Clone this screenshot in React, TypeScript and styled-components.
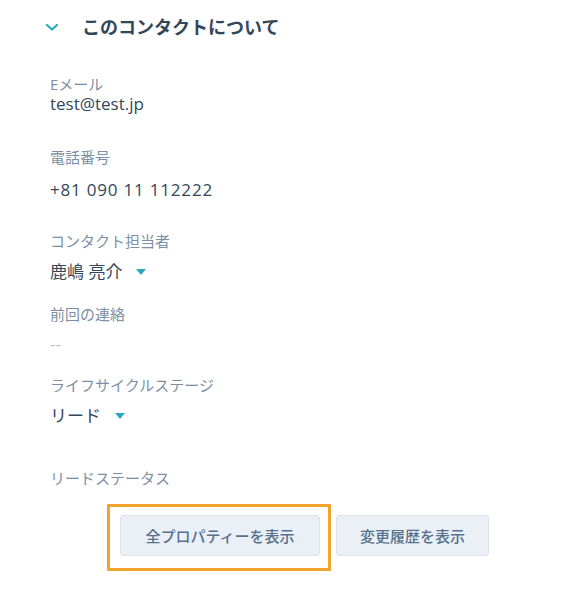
import React from "react";
import styled, { createGlobalStyle } from "styled-components";

const Global = createGlobalStyle`
  html, body { margin: 0; padding: 0; background: #ffffff; }
  body { font-family: Lato, "Noto Sans CJK JP", sans-serif; }
`;

const Page = styled.div`
  width: 566px;
  height: 600px;
  box-sizing: border-box;
  padding-top: 12px;
  background: #ffffff;
`;

const Header = styled.div`
  display: flex;
  align-items: center;
  height: 30px;
  padding-left: 45px;
  gap: 23px;
`;

const Title = styled.h2`
  margin: 0;
  font-family: Lato, "Noto Sans CJK JP", sans-serif;
  font-size: 18px;
  font-weight: 700;
  color: #33475b;
  line-height: 30px;
`;

const Body = styled.div`
  padding-left: 50px;
  margin-top: 33px;
`;

const Field = styled.div<{ $mt: number; $gap: number }>`
  display: flex;
  flex-direction: column;
  gap: ${(p) => p.$gap}px;
  margin-top: ${(p) => p.$mt}px;
`;

const Label = styled.div`
  font-family: "Open Sans", "Noto Sans CJK JP", sans-serif;
  font-size: 15px;
  line-height: 18px;
  color: #7d8fa4;
`;

const Value = styled.div<{ $muted?: boolean; $spaced?: boolean }>`
  display: flex;
  align-items: center;
  font-family: "Open Sans", "Noto Sans CJK JP", sans-serif;
  font-size: 17px;
  line-height: 20px;
  letter-spacing: ${(p) => (p.$spaced ? "0.8px" : "0")};
  color: ${(p) => (p.$muted ? "#b5c0cc" : "#33475b")};
`;

const Caret = styled.span`
  display: inline-block;
  margin-left: 14px;
  width: 0;
  height: 0;
  border-left: 5px solid transparent;
  border-right: 5px solid transparent;
  border-top: 6px solid #2ba6bf;
`;

const Actions = styled.div`
  display: flex;
  align-items: flex-start;
  gap: 5px;
  margin-top: 17px;
  padding-left: 107px;
`;

const Highlight = styled.div`
  display: flex;
  padding: 8px 8px 12px 10px;
  border: 3px solid #f1a52e;
  border-radius: 1px;
`;

const Button = styled.button<{ $w: number }>`
  width: ${(p) => p.$w}px;
  height: 41px;
  box-sizing: border-box;
  background: #eaf0f6;
  border: 1px solid #d9e2ec;
  border-radius: 3px;
  font-family: Lato, "Noto Sans CJK JP", sans-serif;
  font-size: 15px;
  font-weight: 500;
  color: #56708e;
  padding: 0;
`;

const Second = styled.div`
  padding-top: 11px;
`;

const Chevron = () => (
  <svg width="14" height="10" viewBox="0 0 14 10">
    <path d="M2 3 L7 7.5 L12 3" fill="none" stroke="#2ba6bf" strokeWidth="2.2" strokeLinecap="round" strokeLinejoin="round" />
  </svg>
);

export default function App() {
  return (
    <Page>
      <Global />
      <Header>
        <Chevron />
        <Title>このコンタクトについて</Title>
      </Header>
      <Body>
        <Field $mt={0} $gap={1}>
          <Label>Eメール</Label>
          <Value>test@test.jp</Value>
        </Field>
        <Field $mt={34} $gap={14}>
          <Label>電話番号</Label>
          <Value $spaced>+81 090 11 112222</Value>
        </Field>
        <Field $mt={32} $gap={12}>
          <Label>コンタクト担当者</Label>
          <Value>
            鹿嶋 亮介<Caret />
          </Value>
        </Field>
        <Field $mt={23} $gap={11}>
          <Label>前回の連絡</Label>
          <Value $muted>--</Value>
        </Field>
        <Field $mt={22} $gap={12}>
          <Label>ライフサイクルステージ</Label>
          <Value>
            リード<Caret />
          </Value>
        </Field>
        <Field $mt={43} $gap={0}>
          <Label>リードステータス</Label>
        </Field>
      </Body>
      <Actions>
        <Highlight>
          <Button $w={200}>全プロパティーを表示</Button>
        </Highlight>
        <Second>
          <Button $w={153}>変更履歴を表示</Button>
        </Second>
      </Actions>
    </Page>
  );
}
